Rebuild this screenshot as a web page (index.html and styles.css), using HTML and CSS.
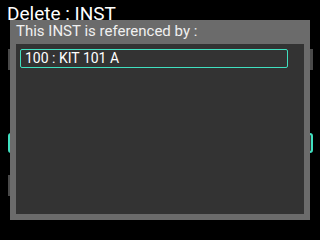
FILE: index.html
```html
<!DOCTYPE html>
<html>
<head>
<meta charset="utf-8">
<link rel="stylesheet" href="styles.css">
</head>
<body>
<div class="screen">
  <div class="header">Delete : INST</div>
  <div class="bg">
    <div class="bg-row gray"></div>
    <div class="bg-row sel"></div>
    <div class="bg-row gray short"></div>
  </div>
  <div class="dialog">
    <div class="dialog-title">This INST is referenced by :</div>
    <div class="dialog-body">
      <div class="item">100 : KIT 101 A</div>
    </div>
  </div>
</div>
</body>
</html>
```
FILE: styles.css
```css
html, body {
  margin: 0;
  padding: 0;
  background: #000;
}
.screen {
  position: relative;
  width: 320px;
  height: 240px;
  overflow: hidden;
  background: #000;
  font-family: Roboto, "Noto Sans", sans-serif;
  color: #fff;
}
.header {
  height: 26px;
  padding-left: 7px;
  font-size: 19px;
  line-height: 26px;
  margin-top: 1px;
}
.bg {
  display: flex;
  flex-direction: column;
  padding-left: 8px;
  margin-top: 22px;
}
.bg-row {
  width: 305px;
  height: 21px;
  box-sizing: border-box;
}
.bg-row.gray {
  background: #4a4a4a;
}
.bg-row.sel {
  margin-top: 63px;
  height: 20px;
  border: 2px solid #40e0c0;
  border-radius: 3px;
  background: #333;
}
.bg-row.short {
  margin-top: 22px;
  width: 200px;
}
.dialog {
  position: absolute;
  left: 10px;
  top: 20px;
  width: 300px;
  height: 200px;
  box-sizing: border-box;
  background: #6b6b6b;
  padding: 0 6px 6px;
  display: flex;
  flex-direction: column;
}
.dialog-title {
  height: 24px;
  line-height: 22px;
  font-size: 15px;
  color: #f0f0f0;
  white-space: nowrap;
}
.dialog-body {
  flex: 1;
  background: #333;
  padding: 5px 16px 0 4px;
}
.item {
  height: 19px;
  box-sizing: border-box;
  border: 1px solid #40e0c0;
  border-radius: 2px;
  padding-left: 4px;
  font-size: 14px;
  line-height: 17px;
  color: #fff;
}
```
